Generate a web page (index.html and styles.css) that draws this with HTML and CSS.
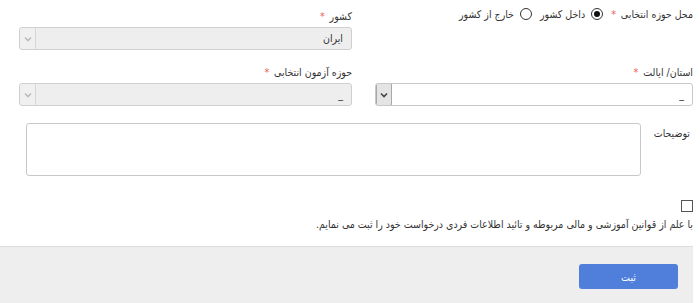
FILE: index.html
```html
<!DOCTYPE html>
<html lang="fa">
<head>
<meta charset="utf-8">
<title>فرم</title>
<link rel="stylesheet" href="styles.css">
</head>
<body>
<div class="page">
  <div class="form">
    <div class="grid">
      <div class="field">
        <div class="label-line">
          <span class="label">محل حوزه انتخابی <span class="req">*</span></span>
          <span class="radio checked"></span><span class="opt">داخل کشور</span>
          <span class="radio"></span><span class="opt">خارج از کشور</span>
        </div>
      </div>
      <div class="field">
        <div class="label">کشور <span class="req">*</span></div>
        <div class="select disabled">
          <span class="value">ایران</span>
          <span class="arrow"><svg width="8" height="6" viewBox="0 0 8 6"><path d="M1 1.5 L4 4.5 L7 1.5" fill="none" stroke="currentColor" stroke-width="1.6"/></svg></span>
        </div>
      </div>
      <div class="field">
        <div class="label">استان/ ایالت <span class="req">*</span></div>
        <div class="select">
          <span class="value">_</span>
          <span class="arrow"><svg width="8" height="6" viewBox="0 0 8 6"><path d="M1 1.5 L4 4.5 L7 1.5" fill="none" stroke="currentColor" stroke-width="1.6"/></svg></span>
        </div>
      </div>
      <div class="field">
        <div class="label">حوزه آزمون انتخابی <span class="req">*</span></div>
        <div class="select disabled">
          <span class="value">_</span>
          <span class="arrow"><svg width="8" height="6" viewBox="0 0 8 6"><path d="M1 1.5 L4 4.5 L7 1.5" fill="none" stroke="currentColor" stroke-width="1.6"/></svg></span>
        </div>
      </div>
    </div>
    <div class="desc-row">
      <div class="desc-label">توضیحات</div>
      <div class="textarea"><span class="grip"></span></div>
    </div>
    <div class="check-row"><span class="checkbox"></span></div>
    <div class="agree">با علم از قوانین آموزشی و مالی مربوطه و تائید اطلاعات فردی درخواست خود را ثبت می نمایم.</div>
  </div>
  <div class="footer">
    <button class="btn" type="button">ثبت</button>
  </div>
</div>
</body>
</html>
```

FILE: styles.css
```css
* { box-sizing: border-box; }
body {
  margin: 0;
  background: #fff;
  font-family: "DejaVu Sans Condensed", "DejaVu Sans", sans-serif;
  font-size: 10.5px;
  color: #333;
}
.page {
  width: 693px;
  direction: rtl;
}
.form {
  padding: 8px 0 0 19px;
}
.grid {
  display: grid;
  grid-template-columns: 318px 333px;
  column-gap: 23px;
  row-gap: 14px;
}
.field {
  display: flex;
  flex-direction: column;
  gap: 3px;
}
.label, .label-line {
  line-height: 16px;
  height: 16px;
}
.label-line {
  display: flex;
  align-items: center;
  margin-top: -2px;
}
.req {
  color: #f05a5a;
  margin-right: 2px;
}
.radio {
  width: 12px;
  height: 12px;
  border: 1px solid #333;
  border-radius: 50%;
  margin: 0 8px 0 6px;
  position: relative;
  background: #fff;
}
.radio.checked::after {
  content: "";
  position: absolute;
  left: 2px;
  top: 2px;
  width: 6px;
  height: 6px;
  border-radius: 50%;
  background: #111;
}
.opt { white-space: nowrap; }
.select {
  height: 23px;
  border: 1px solid #c8c8c8;
  border-radius: 3px;
  display: flex;
  align-items: stretch;
  background: #fff;
  overflow: hidden;
}
.select .value {
  flex: 1;
  padding-right: 8px;
  line-height: 21px;
}
.select .arrow {
  width: 16px;
  display: flex;
  align-items: center;
  justify-content: center;
  background: #e4e4e4;
  border: 1px solid #a8a8a8;
  border-radius: 2px;
  margin: -1px -1px -1px 0;
  color: #444;
}
.select.disabled {
  background: #eeeeee;
  border-color: #cfcfcf;
}
.select.disabled .arrow {
  background: #f0f0f0;
  border: none;
  border-right: 1px solid #d6d6d6;
  margin: 0;
  color: #bbb;
}
.desc-row {
  display: flex;
  align-items: flex-start;
  margin-top: 17px;
}
.desc-label {
  width: 52px;
  padding-right: 3px;
  line-height: 16px;
  margin-top: 2px;
}
.textarea {
  width: 615px;
  height: 53px;
  border: 1px solid #c8c8c8;
  border-radius: 3px;
  position: relative;
  background: #fff;
}
.grip {
  position: absolute;
  left: 3px;
  bottom: 3px;
  width: 6px;
  height: 6px;
  background-image: radial-gradient(circle, #999 0.6px, transparent 0.7px);
  background-size: 2px 2px;
}
.check-row {
  margin-top: 24px;
  height: 12px;
  display: flex;
}
.checkbox {
  width: 12px;
  height: 12px;
  border: 1px solid #555;
  background: #fff;
}
.agree {
  margin-top: 4px;
  line-height: 16px;
  white-space: nowrap;
}
.footer {
  margin-top: 14px;
  background: #eeeeee;
  border-top: 1px solid #dddddd;
  height: 61px;
  padding: 17px 15px 0 0;
  display: flex;
}
.btn {
  width: 99px;
  height: 25px;
  border: none;
  border-radius: 3px;
  background: #4f7fdb;
  color: #fff;
  font-family: "DejaVu Sans Condensed", "DejaVu Sans", sans-serif;
  font-size: 10.5px;
}
```
